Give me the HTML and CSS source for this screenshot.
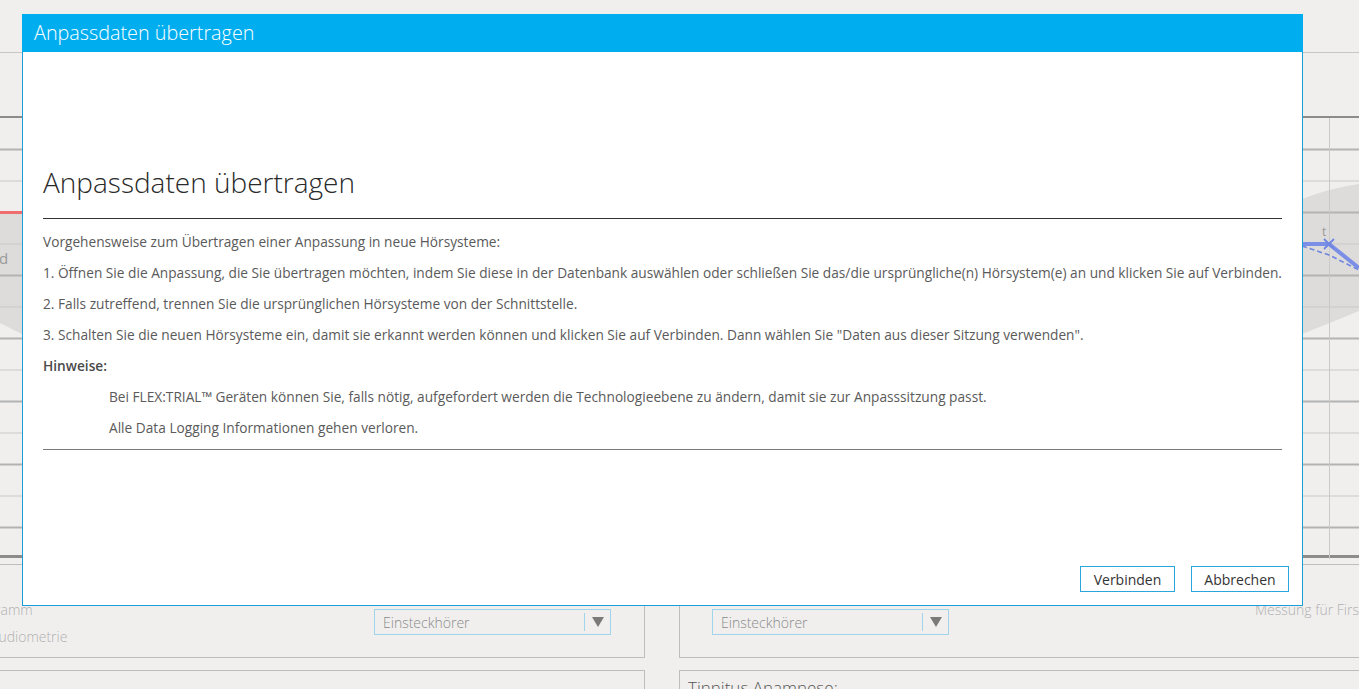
FILE: index.html
```html
<!DOCTYPE html>
<html lang="de">
<head>
<meta charset="utf-8">
<title>Anpassdaten übertragen</title>
<link rel="stylesheet" href="styles.css">
</head>
<body>
<div class="app">
  <div class="topbar"></div>
  <div class="toolbar"></div>
  <div class="chart">
    <svg class="chart-svg" width="1359" height="441" viewBox="0 0 1359 441">
      <path d="M0,94 L22,94 L22,216 L0,205 Z" fill="#dddcdb"/>
      <path d="M1302,81 Q1330,70 1359,66 L1359,193 Q1330,205 1302,216 Z" fill="#dddcdb"/>
      <g stroke="#c9c9c9" stroke-width="1">
        <line x1="0" y1="63" x2="1359" y2="63"/>
        <line x1="0" y1="126" x2="1359" y2="126"/>
        <line x1="0" y1="189" x2="1359" y2="189"/>
        <line x1="0" y1="252" x2="1359" y2="252"/>
        <line x1="0" y1="315" x2="1359" y2="315"/>
        <line x1="0" y1="378" x2="1359" y2="378"/>
      </g>
      <g stroke="#b3b3b3" stroke-width="2">
        <line x1="0" y1="31.5" x2="1359" y2="31.5"/>
        <line x1="0" y1="94.5" x2="1359" y2="94.5"/>
        <line x1="0" y1="157.5" x2="1359" y2="157.5"/>
        <line x1="0" y1="220.5" x2="1359" y2="220.5"/>
        <line x1="0" y1="283.5" x2="1359" y2="283.5"/>
        <line x1="0" y1="346.5" x2="1359" y2="346.5"/>
        <line x1="0" y1="409.5" x2="1359" y2="409.5"/>
      </g>
      <line x1="1329.5" y1="0" x2="1329.5" y2="441" stroke="#c9c9c9" stroke-width="1"/>
      <line x1="0" y1="94.5" x2="22" y2="94.5" stroke="#ef6d6d" stroke-width="3"/>
      <text x="-1" y="146" class="chart-label">d</text>
      <text x="1322" y="118" class="chart-mark">t</text>
      <path d="M1302,128 L1329,137 L1359,152" fill="none" stroke="#6f86e0" stroke-width="1.6" stroke-dasharray="5,3"/>
      <path d="M1302,126 L1329,126 L1359,150" fill="none" stroke="#7b8fe6" stroke-width="4"/>
      <path d="M1324,121 L1334,131 M1334,121 L1324,131" stroke="#6f86e0" stroke-width="1.8"/>
    </svg>
  </div>
  <div class="panels">
    <div class="panel panel-left">
      <div class="panel-row">
        <div class="labels">
          <span class="label label-1">Programm</span>
          <span class="label label-2">Audiometrie</span>
        </div>
        <div class="dropdown">
          <span class="dropdown-text">Einsteckhörer</span>
          <span class="dropdown-arrow"></span>
        </div>
      </div>
    </div>
    <div class="panel panel-right">
      <div class="panel-row">
        <div class="dropdown">
          <span class="dropdown-text">Einsteckhörer</span>
          <span class="dropdown-arrow"></span>
        </div>
        <span class="label measure">Messung für First Fit</span>
      </div>
    </div>
  </div>
  <div class="panels panels-lower">
    <div class="panel panel-left low"></div>
    <div class="panel panel-right low">
      <div class="section-title">Tinnitus Anamnese:</div>
    </div>
  </div>
</div>

<div class="dialog" role="dialog" aria-labelledby="dlg-title">
  <div class="dialog-titlebar" id="dlg-title">Anpassdaten übertragen</div>
  <div class="dialog-body">
    <h1 class="dialog-heading">Anpassdaten übertragen</h1>
    <div class="dialog-text">
      <p>Vorgehensweise zum Übertragen einer Anpassung in neue Hörsysteme:</p>
      <p>1. Öffnen Sie die Anpassung, die Sie übertragen möchten, indem Sie diese in der Datenbank auswählen oder schließen Sie das/die ursprüngliche(n) Hörsystem(e) an und klicken Sie auf Verbinden.</p>
      <p>2. Falls zutreffend, trennen Sie die ursprünglichen Hörsysteme von der Schnittstelle.</p>
      <p>3. Schalten Sie die neuen Hörsysteme ein, damit sie erkannt werden können und klicken Sie auf Verbinden. Dann wählen Sie "Daten aus dieser Sitzung verwenden".</p>
      <p class="note-title">Hinweise:</p>
      <p class="note">Bei FLEX:TRIAL™ Geräten können Sie, falls nötig, aufgefordert werden die Technologieebene zu ändern, damit sie zur Anpasssitzung passt.</p>
      <p class="note">Alle Data Logging Informationen gehen verloren.</p>
    </div>
  </div>
  <div class="dialog-footer">
    <button class="btn btn-connect">Verbinden</button>
    <button class="btn btn-cancel">Abbrechen</button>
  </div>
</div>
</body>
</html>
```
FILE: styles.css
```css
* { box-sizing: border-box; }

html, body {
  margin: 0;
  padding: 0;
}

body {
  width: 1359px;
  height: 689px;
  overflow: hidden;
  background: #f0efee;
  font-family: "Open Sans", "Noto Sans", sans-serif;
  color: #555;
  position: relative;
}

.app {
  width: 1359px;
  height: 689px;
  overflow: hidden;
}

.topbar {
  height: 53px;
  border-bottom: 1px solid #c6c6c6;
}

.toolbar {
  height: 63px;
}

.chart {
  height: 442px;
  border-top: 2px solid #8c8c8c;
  border-bottom: 3px solid #8c8c8c;
}

.chart-svg {
  display: block;
}

.chart-label {
  font-family: "Open Sans", sans-serif;
  font-size: 15px;
  fill: #9a9a9a;
}

.chart-mark {
  font-family: "Open Sans", sans-serif;
  font-size: 12px;
  fill: #9a9a9a;
}

.panels {
  display: flex;
  gap: 34px;
  margin-top: 6px;
}

.panels-lower {
  margin-top: 12px;
}

.panel {
  border: 1px solid #bdbdbd;
  height: 94px;
}

.panel-left {
  margin-left: -10px;
  width: 655px;
  flex: none;
}

.panel-right {
  flex: 1;
  margin-right: -120px;
}

.panel-row {
  display: flex;
  align-items: flex-start;
  padding-top: 31px;
}

.panel-right .panel-row {
  padding-left: 32px;
}

.labels {
  width: 383px;
  display: flex;
  flex-direction: column;
  flex: none;
}

.label {
  font-size: 14px;
  line-height: 27px;
  color: #b0b0b0;
  font-weight: 300;
  white-space: nowrap;
}

.label-1 { margin-left: -25px; }
.label-2 { margin-left: -1px; }

.measure {
  margin-left: 306px;
}

.dropdown {
  width: 237px;
  height: 26px;
  margin-top: 13px;
  border: 1px solid #9fd4ea;
  display: flex;
  align-items: center;
  flex: none;
  position: relative;
}

.dropdown-text {
  flex: 1;
  padding-left: 8px;
  font-size: 14px;
  font-weight: 300;
  color: #8a8a8a;
}

.dropdown-arrow {
  width: 26px;
  height: 18px;
  border-left: 1px solid #9fd4ea;
  display: flex;
  align-items: center;
  justify-content: center;
}

.dropdown-arrow::after {
  content: "";
  border-left: 6px solid transparent;
  border-right: 6px solid transparent;
  border-top: 10px solid #7a7a7a;
}

.low {
  height: 40px;
}

.section-title {
  font-size: 17px;
  font-weight: 300;
  color: #555;
  padding: 5px 0 0 8px;
  white-space: nowrap;
}

/* dialog */
.dialog {
  position: absolute;
  left: 22px;
  top: 14px;
  width: 1281px;
  height: 592px;
  background: #fff;
  border: 1px solid #1b9dd8;
  border-top: none;
  display: flex;
  flex-direction: column;
}

.dialog-titlebar {
  height: 38px;
  margin: 0 -1px;
  background: #00aeef;
  color: #fff;
  font-size: 19.8px;
  font-weight: 300;
  line-height: 38px;
  padding-left: 12px;
}

.dialog-body {
  flex: 1;
  padding: 0 20px;
}

.dialog-heading {
  margin: 113px 0 0;
  font-size: 28px;
  font-weight: 300;
  line-height: 34px;
  color: #2a2a2a;
  padding-bottom: 19px;
  border-bottom: 1px solid #333;
}

.dialog-text {
  padding: 7px 0 6px;
  border-bottom: 1px solid #7a7a7a;
}

.dialog-text p {
  margin: 0;
  font-size: 13.7px;
  line-height: 31px;
  color: #5a5a5a;
  white-space: nowrap;
}

.dialog-text .note-title {
  font-weight: 600;
  color: #4a4a4a;
}

.dialog-text .note {
  padding-left: 66px;
}

.dialog-footer {
  display: flex;
  justify-content: flex-end;
  gap: 16px;
  padding: 0 13px 13px 0;
}

.btn {
  height: 26px;
  padding: 0;
  background: #fff;
  border: 1px solid #2aa6dc;
  font-family: "Open Sans", sans-serif;
  font-size: 14px;
  color: #333;
  border-radius: 0;
}

.btn-connect { width: 95px; }
.btn-cancel { width: 98px; }
```
